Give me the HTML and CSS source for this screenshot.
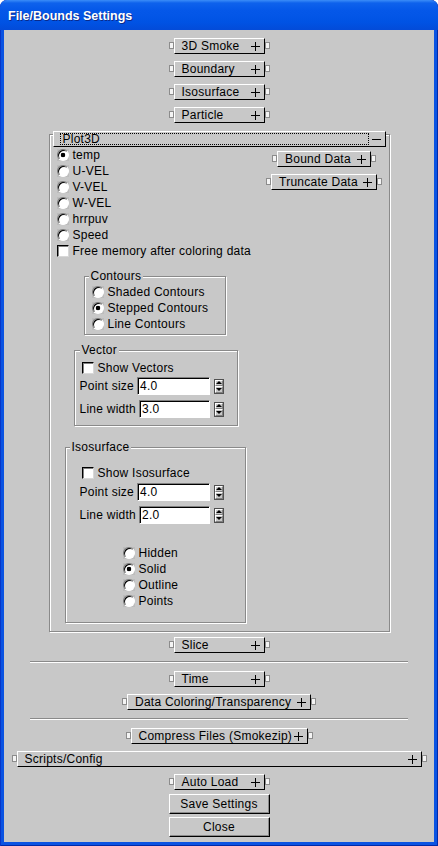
FILE: index.html
```html
<!DOCTYPE html>
<html>
<head>
<meta charset="utf-8">
<link rel="stylesheet" href="styles.css">
</head>
<body>
<div class="window">
  <div class="titlebar"><span class="title">File/Bounds Settings</span></div>
  <div class="client">
    <div class="rl first"><i class="tab"></i><div class="rb w91"><span>3D Smoke</span><i class="plus"></i></div><i class="tab"></i></div>
    <div class="rl"><i class="tab"></i><div class="rb w91"><span>Boundary</span><i class="plus"></i></div><i class="tab"></i></div>
    <div class="rl"><i class="tab"></i><div class="rb w91"><span>Isosurface</span><i class="plus"></i></div><i class="tab"></i></div>
    <div class="rl"><i class="tab"></i><div class="rb w91"><span>Particle</span><i class="plus"></i></div><i class="tab"></i></div>

    <div class="p3d">
      <div class="p3d-head"><span class="focus">Plot3D</span><i class="minus"></i></div>
      <div class="p3d-body">
        <div class="lcol">
          <div class="opt"><i class="radio on"><b></b></i>temp</div>
          <div class="opt"><i class="radio"><b></b></i>U-VEL</div>
          <div class="opt"><i class="radio"><b></b></i>V-VEL</div>
          <div class="opt"><i class="radio"><b></b></i>W-VEL</div>
          <div class="opt"><i class="radio"><b></b></i>hrrpuv</div>
          <div class="opt"><i class="radio"><b></b></i>Speed</div>
          <div class="opt"><i class="check"></i>Free memory after coloring data</div>

          <div class="grp contours">
            <div class="glabel">Contours</div>
            <div class="opt top1"><i class="radio"><b></b></i>Shaded Contours</div>
            <div class="opt"><i class="radio on"><b></b></i>Stepped Contours</div>
            <div class="opt"><i class="radio"><b></b></i>Line Contours</div>
          </div>

          <div class="grp vector">
            <div class="glabel">Vector</div>
            <div class="opt chk-row vtop"><i class="check"></i>Show Vectors</div>
            <div class="field f1"><span>Point size</span><span class="inp">4.0</span><span class="spin"><i class="up"></i><i class="dn"></i></span></div>
            <div class="field f2"><span>Line width</span><span class="inp">3.0</span><span class="spin"><i class="up"></i><i class="dn"></i></span></div>
          </div>

          <div class="grp iso">
            <div class="glabel">Isosurface</div>
            <div class="opt chk-row itop"><i class="check"></i>Show Isosurface</div>
            <div class="field f1i"><span>Point size</span><span class="inp">4.0</span><span class="spin"><i class="up"></i><i class="dn"></i></span></div>
            <div class="field f2"><span>Line width</span><span class="inp">2.0</span><span class="spin"><i class="up"></i><i class="dn"></i></span></div>
            <div class="rgroup">
              <div class="opt"><i class="radio"><b></b></i>Hidden</div>
              <div class="opt"><i class="radio on"><b></b></i>Solid</div>
              <div class="opt"><i class="radio"><b></b></i>Outline</div>
              <div class="opt"><i class="radio"><b></b></i>Points</div>
            </div>
          </div>
        </div>
        <div class="rcol">
          <div class="rl rfirst"><i class="tab"></i><div class="rb w94"><span>Bound Data</span><i class="plus"></i></div><i class="tab"></i></div>
          <div class="rl"><i class="tab"></i><div class="rb w106"><span>Truncate Data</span><i class="plus"></i></div><i class="tab"></i></div>
        </div>
      </div>
    </div>

    <div class="rl after-p3d"><i class="tab"></i><div class="rb w91"><span>Slice</span><i class="plus"></i></div><i class="tab"></i></div>
    <div class="sep"></div>
    <div class="rl after-sep"><i class="tab"></i><div class="rb w91"><span>Time</span><i class="plus"></i></div><i class="tab"></i></div>
    <div class="rl"><i class="tab"></i><div class="rb w184"><span>Data Coloring/Transparency</span><i class="plus"></i></div><i class="tab"></i></div>
    <div class="sep"></div>
    <div class="rl after-sep"><i class="tab"></i><div class="rb w177"><span>Compress Files (Smokezip)</span><i class="plus"></i></div><i class="tab"></i></div>
    <div class="rl"><i class="tab"></i><div class="rb w405"><span>Scripts/Config</span><i class="plus"></i></div><i class="tab"></i></div>
    <div class="rl"><i class="tab"></i><div class="rb w91"><span>Auto Load</span><i class="plus"></i></div><i class="tab"></i></div>
    <div class="btn save">Save Settings</div>
    <div class="btn close">Close</div>
  </div>
</div>
</body>
</html>
```
FILE: styles.css
```css
* { box-sizing: border-box; }

body {
  margin: 0;
  background: #ffffff;
  font-family: "Liberation Sans", Arial, Helvetica, sans-serif;
  font-size: 12px;
  letter-spacing: 0.25px;
  color: #000;
}

i { font-style: normal; }

.window {
  width: 438px;
  height: 846px;
  display: flex;
  flex-direction: column;
  background: #0a53e2;
  border-radius: 7px 7px 0 0;
  overflow: hidden;
  box-shadow: inset 1px 0 0 #0836c8, inset -1px 0 0 #002aa8, inset 0 -1px 0 #002aa8;
}

.titlebar {
  height: 30px;
  flex: none;
  display: flex;
  align-items: center;
  padding-left: 8px;
  padding-top: 1px;
  background: linear-gradient(#3b8df8 0, #0e62ec 3px, #0558e9 10px, #0053e4 22px, #034bd8 30px);
  border-radius: 7px 7px 0 0;
}

.title {
  color: #fff;
  font-weight: bold;
  font-size: 12.5px;
  letter-spacing: 0;
  text-shadow: 1px 1px 0 #0b2a8a;
}

.client {
  flex: 1;
  margin: 0 4px 4px;
  background: #c8c8c8;
  display: flex;
  flex-direction: column;
  align-items: center;
}

/* rollout rows */
.rl {
  display: flex;
  align-items: center;
  height: 16px;
  margin-top: 7px;
  flex: none;
}
.rl.first { margin-top: 8px; }
.rl.after-p3d { margin-top: 5px; }
.rl.after-sep { margin-top: 8px; }
.rl.rfirst { margin-top: 4px; }

.tab {
  display: block;
  width: 5px;
  height: 7px;
  margin-bottom: 2px;
  border: 1px solid #8c8c8c;
  background: #f4f4f4;
}

.rb {
  height: 16px;
  display: flex;
  align-items: center;
  justify-content: space-between;
  padding: 0 4px 0 7px;
  border: 1px solid;
  border-color: #fff #000 #000 #fff;
  white-space: nowrap;
  line-height: 14px;
}
.w91 { width: 91px; }
.w94 { width: 94px; }
.w106 { width: 106px; }
.w177 { width: 177px; }
.w184 { width: 184px; }
.w405 { width: 405px; }

.plus {
  display: block;
  width: 9px;
  height: 9px;
  flex: none;
  background:
    linear-gradient(#000, #000) center / 1px 100% no-repeat,
    linear-gradient(#000, #000) center / 100% 1px no-repeat;
}

/* Plot3D panel */
.p3d {
  width: 341px;
  margin-top: 11px;
  flex: none;
  border: 1px solid #8a8a8a;
  box-shadow: inset 1px 1px 0 #fff, 1px 1px 0 #fff;
}
.p3d-head {
  height: 16px;
  margin: -4px 3px 0 3px;
  border: 1px solid;
  border-color: #fff #000 #000 #fff;
  background: #c8c8c8;
  display: flex;
  align-items: center;
  padding: 1px 4px 1px 6px;
}
.focus {
  flex: 1;
  height: 100%;
  border: 1px dotted #000;
  display: flex;
  align-items: center;
  padding-left: 2px;
  line-height: 12px;
}
.minus {
  display: block;
  width: 9px;
  height: 1px;
  background: #000;
  margin-left: 3px;
}

.p3d-body {
  display: flex;
  align-items: flex-start;
}
.lcol {
  width: 197px;
  margin-left: 7px;
  padding-bottom: 8px;
  flex: none;
}
.rcol {
  width: 123px;
  margin-left: 9px;
  display: flex;
  flex-direction: column;
  align-items: center;
  flex: none;
}

/* options */
.opt {
  display: flex;
  align-items: center;
  height: 16px;
  white-space: nowrap;
}
.radio {
  display: block;
  width: 12px;
  height: 12px;
  flex: none;
  margin-right: 4px;
  background: #bcbcbc;
}
.radio b {
  display: block;
  width: 12px;
  height: 12px;
  border-radius: 50%;
  background: #fff;
  border: 1px solid;
  border-color: #7a7a7a #fff #fff #7a7a7a;
  box-shadow: inset 1px 1px 0 #000;
}
.radio.on b {
  background: radial-gradient(circle, #000 0, #000 2px, #fff 2.6px);
}
.check {
  display: block;
  width: 12px;
  height: 12px;
  flex: none;
  margin-right: 4px;
  background: #fff;
  border: 1px solid;
  border-color: #000 #d8d8d8 #d8d8d8 #000;
  box-shadow: inset 1px 1px 0 #808080;
}

/* group boxes */
.grp {
  border: 1px solid #8a8a8a;
  box-shadow: inset 1px 1px 0 #fff, 1px 1px 0 #fff;
}
.glabel {
  margin-top: -8px;
  height: 14px;
  line-height: 14px;
  width: max-content;
  padding: 0 2px;
  background: #c8c8c8;
}
.contours {
  width: 142px;
  margin: 17px 0 0 27px;
  padding: 0 0 2px 7px;
}
.contours .glabel { margin-left: -3px; }
.top1 { margin-top: 1px; }

.vector {
  width: 164px;
  margin: 15px 0 0 17px;
  padding: 0 0 7px 5px;
}
.chk-row { padding-left: 2px; }
.vtop { margin-top: 3px; }

.iso {
  width: 181px;
  margin: 21px 0 0 8px;
  padding: 0 0 13px 14px;
}
.iso .glabel { margin-left: -10px; }
.itop { margin-top: 11px; }

.field {
  display: flex;
  align-items: center;
  width: 144px;
  height: 18px;
  white-space: nowrap;
}
.f1 { margin-top: 1px; }
.f1i { margin-top: 2px; }
.f2 { margin-top: 5px; }
.inp {
  flex: 1;
  margin-left: 3px;
  height: 18px;
  background: #fff;
  border: 1px solid;
  border-color: #808080 #fff #fff #808080;
  box-shadow: inset 1px 1px 0 #000;
  padding-left: 2px;
  line-height: 16px;
}
.spin {
  display: flex;
  flex-direction: column;
  width: 10px;
  height: 15px;
  margin-left: 4px;
  flex: none;
  border: 1px solid #505050;
  background: #c8c8c8;
}
.spin i {
  flex: 1;
  display: flex;
  align-items: center;
  justify-content: center;
  border-top: 1px solid #fff;
  border-left: 1px solid #fff;
  border-bottom: 1px solid #808080;
  border-right: 1px solid #808080;
}
.spin .up::before {
  content: "";
  border-left: 3px solid transparent;
  border-right: 3px solid transparent;
  border-bottom: 3px solid #000;
}
.spin .dn::before {
  content: "";
  border-left: 3px solid transparent;
  border-right: 3px solid transparent;
  border-top: 3px solid #000;
}

.rgroup {
  margin: 21px 0 0 43px;
}

/* separators and buttons */
.sep {
  width: 378px;
  height: 2px;
  margin-top: 8px;
  flex: none;
  border-top: 1px solid #8a8a8a;
  border-bottom: 1px solid #fff;
}

.btn {
  width: 101px;
  height: 20px;
  flex: none;
  display: flex;
  align-items: center;
  justify-content: center;
  border: 1px solid;
  border-color: #fff #000 #000 #fff;
  box-shadow: inset -1px -1px 0 #8a8a8a;
}
.btn.save { margin-top: 4px; }
.btn.close { margin-top: 3px; }
```
